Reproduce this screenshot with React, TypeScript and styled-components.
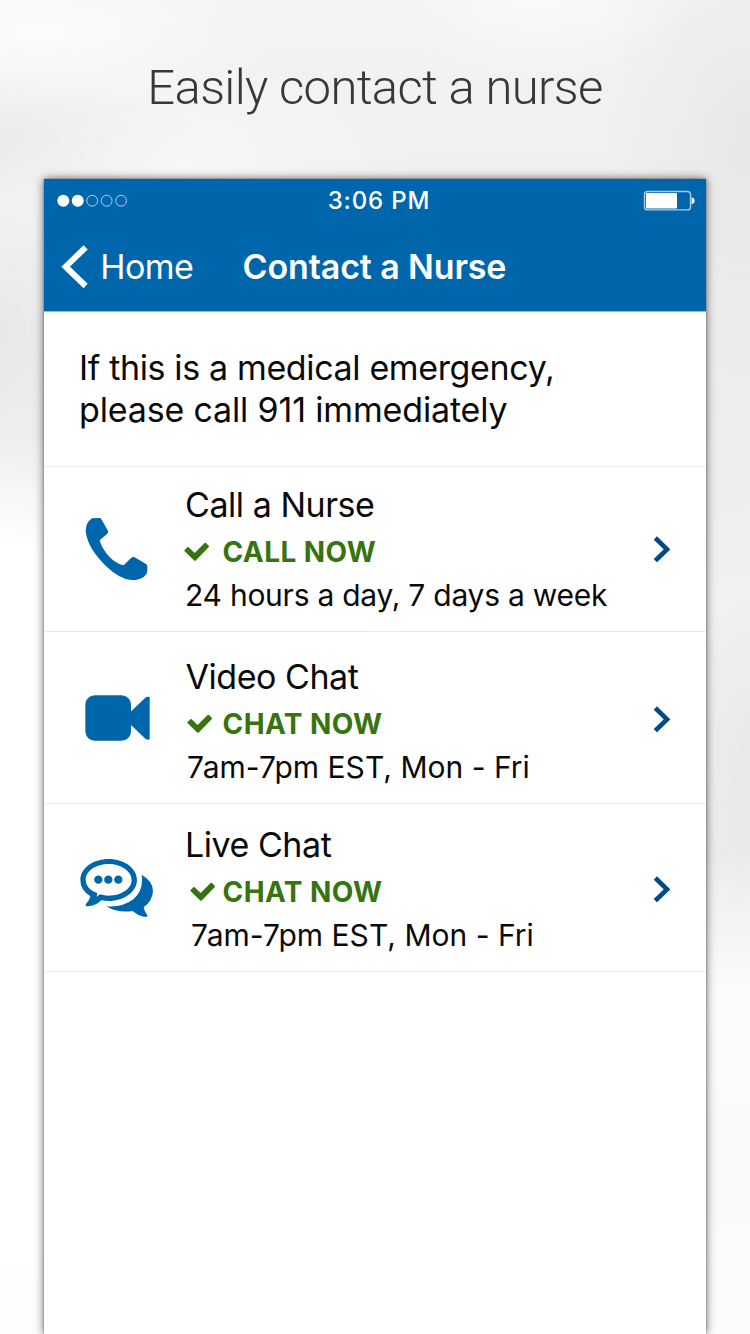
import React from "react";
import styled, { createGlobalStyle } from "styled-components";

const blue = "#0066ab";
const green = "#37740f";

const GlobalStyle = createGlobalStyle`
  * { box-sizing: border-box; }
  html, body { margin: 0; padding: 0; }
  body { font-family: Inter, "Liberation Sans", sans-serif; color: #0a0a0a; }
  svg { display: block; flex: none; }
`;

const Page = styled.main`
  width: 750px;
  height: 1334px;
  overflow: hidden;
  display: flex;
  flex-direction: column;
  align-items: center;
  background:
    radial-gradient(ellipse 210px 65px at 0px 140px, rgba(0, 0, 0, 0.03), transparent),
    radial-gradient(ellipse 240px 90px at 40px 30px, rgba(255, 255, 255, 0.7), transparent),
    radial-gradient(ellipse 250px 110px at 170px 165px, rgba(255, 255, 255, 0.5), transparent),
    radial-gradient(ellipse 150px 260px at 750px 130px, rgba(0, 0, 0, 0.04), transparent),
    radial-gradient(ellipse 160px 80px at 540px 0px, rgba(255, 255, 255, 0.55), transparent),
    radial-gradient(ellipse 70px 90px at 0px 330px, rgba(0, 0, 0, 0.025), transparent),
    radial-gradient(ellipse 60px 170px at 750px 750px, rgba(0, 0, 0, 0.025), transparent),
    radial-gradient(ellipse 400px 470px at 0px 900px, #fff 0, #fff 75%, rgba(255, 255, 255, 0) 100%),
    linear-gradient(to bottom, #f3f3f3 0, #f0f0f0 180px, #ececec 400px, #f1f1f1 600px, #ececec 850px, #fcfcfc 1000px, #f9f9f9 1160px, #fcfcfc 1334px);
`;

const Headline = styled.h1`
  margin: 0;
  height: 179px;
  padding-top: 58px;
  font: 300 49px/60px Roboto, "Liberation Sans", sans-serif;
  letter-spacing: -0.65px;
  color: #383838;
`;

const Phone = styled.section`
  width: 662px;
  flex: 1;
  background: #fff;
  box-shadow: 0 0 9px rgba(0, 0, 0, 0.6), 0 0 2px rgba(0, 0, 0, 0.35);
`;

const Header = styled.header`
  height: 133px;
  background: ${blue};
  border-bottom: 1px solid #8fbadb;
  color: #fff;
`;

const StatusBar = styled.div`
  height: 44px;
  display: grid;
  grid-template-columns: 1fr auto 1fr;
  align-items: center;
  padding: 0 11px 0 13px;
`;

const Clock = styled.time`
  font-size: 24px;
  font-weight: 500;
  line-height: 44px;
  letter-spacing: 0.85px;
  padding-left: 6px;
`;

const Battery = styled.svg`
  justify-self: end;
`;

const NavBar = styled.nav`
  height: 88px;
  display: flex;
  align-items: center;
  padding: 0 0 0 16.5px;
`;

const BackLink = styled.a`
  display: flex;
  align-items: center;
  gap: 12.5px;
  width: 182px;
  font-size: 34px;
  letter-spacing: -0.6px;
  line-height: 44px;
`;

const NavTitle = styled.h2`
  margin: 0;
  font-size: 34px;
  font-weight: 600;
  line-height: 44px;
  letter-spacing: -0.12px;
`;

const Notice = styled.div`
  height: 155px;
  padding: 35px 0 0 35px;
  border-bottom: 1px solid #eeeeee;
`;

const NoticeLine = styled.p<{ $tracking: number }>`
  margin: 0;
  font-size: 34px;
  line-height: 42px;
  white-space: nowrap;
  letter-spacing: ${(p) => p.$tracking}px;
`;

const Row = styled.article<{ $height: number }>`
  height: ${(p) => p.$height}px;
  display: grid;
  grid-template-columns: 104px 1fr 18px;
  padding: 0 35.5px 0 36px;
  border-bottom: 1px solid #ebebeb;
`;

const IconCell = styled.div<{ $inset: number }>`
  display: flex;
  align-items: center;
  padding-left: ${(p) => p.$inset}px;
`;

const Details = styled.div<{ $top: number }>`
  padding-top: ${(p) => p.$top}px;
  white-space: nowrap;
`;

const ServiceName = styled.h3<{ $inset: number }>`
  margin: 0;
  padding-left: ${(p) => p.$inset}px;
  font-size: 34px;
  font-weight: 400;
  line-height: 50px;
  letter-spacing: -0.46px;
`;

const Availability = styled.div<{ $checkInset: number }>`
  display: grid;
  grid-template-columns: 38.5px auto;
  align-items: center;
  height: 44px;
  font-size: 28px;
  font-weight: 700;
  line-height: 44px;
  letter-spacing: 0.42px;
  color: ${green};

  svg { margin-left: ${(p) => p.$checkInset}px; }
`;

const Hours = styled.p<{ $inset: number; $tracking: number }>`
  margin: 0;
  padding-left: ${(p) => p.$inset}px;
  font-size: 30px;
  line-height: 43px;
  letter-spacing: ${(p) => p.$tracking}px;
`;

const ChevronCell = styled.div<{ $drop: number }>`
  display: flex;
  align-items: center;
  padding-top: ${(p) => p.$drop}px;
`;

const SignalDots = () => (
  <svg width="72" height="14" viewBox="0 0 72 14">
    {[0, 1, 2, 3, 4].map((i) => (
      <circle
        key={i}
        cx={6.3 + i * 14.45}
        cy="6.7"
        r={i < 2 ? 6 : 5.4}
        fill={i < 2 ? "#fff" : "none"}
        stroke={i < 2 ? "none" : "#b5d2e8"}
        strokeWidth="1"
      />
    ))}
  </svg>
);

const BatteryIcon = () => (
  <Battery width="52" height="22" viewBox="0 0 52 22">
    <rect x="1.5" y="1.5" width="46" height="18.4" rx="3" fill="none" stroke="#a9cce6" strokeWidth="1.4" />
    <rect x="3" y="3" width="31" height="15.4" rx="1" fill="#fff" />
    <path d="M48.6 7.2q3 .6 3 3.5t-3 3.5z" fill="#fff" />
  </Battery>
);

const BackIcon = () => (
  <svg width="27.3" height="44.7" viewBox="50 193 82 134">
    <path d="M124 200 64 258l60 58" fill="none" stroke="#fff" strokeWidth="18" />
  </svg>
);

const ChevronIcon = () => (
  <svg width="17.7" height="26.7" viewBox="68 48 53 80">
    <path d="m75 54 35 34-35 34" fill="none" stroke="#004b87" strokeWidth="14" />
  </svg>
);

const CheckIcon = () => (
  <svg width="25.3" height="19.3" viewBox="372 156 76 58">
    <path
      d="M374 184q-2-2 0-4l8-8q2-2 4 0l18 17 29-29q3-3 6 0l7 7q2 3 0 5l-38 39q-3 3-6 0z"
      fill={green}
    />
  </svg>
);

const PhoneIcon = () => (
  <svg width="64" height="64" viewBox="75 81 192 192">
    <path
      d="M96 85l22-1q4 0 6 4l19 33q3 6-1 10l-23 20q6 25 29 49 20 21 43 26l22-22q5-5 11-2l33 19q5 3 5 9v12q0 10-10 18-16 11-38 10-36-4-74-40-56-52-63-106 0-26 19-39z"
      fill={blue}
    />
  </svg>
);

const VideoIcon = () => (
  <svg width="65" height="46" viewBox="76 75 195 138">
    <rect x="77" y="76" width="137" height="136" rx="28" fill={blue} />
    <path d="M210 128l47-45q6-5 13-2v127q-7 3-13-2l-47-45z" fill={blue} />
  </svg>
);

const ChatIcon = () => (
  <svg width="73.3" height="59" viewBox="60 54 220 177">
    <path
      fill={blue}
      fillRule="evenodd"
      d="M146 57c47 0 85 28 85 63s-38 63-85 63q-12 0-22-2-17 17-40 18-11 0-6-7 10-9 13-23-30-19-30-49c0-35 38-63 85-63zm0 15c-38 0-69 21-69 48q0 26 35 40l-2 10 10-7q12 4 26 4c38 0 69-21 69-47s-31-48-69-48z"
    />
    {[115, 145, 175].map((cx) => (
      <circle key={cx} cx={cx} cy="119" r="12.5" fill={blue} />
    ))}
    <path
      fill={blue}
      d="M245 104q34 20 34 48 0 28-28 50 2 12 12 26-3 4-12 2-18-4-34-17-42 7-79-14 50 4 82-21 32-27 25-74z"
    />
  </svg>
);

type Service = {
  name: string;
  status: string;
  hours: string;
  icon: React.ReactNode;
  height: number;
  top: number;
  iconInset: number;
  nameInset: number;
  checkInset: number;
  hoursInset: number;
  hoursTracking: number;
  drop: number;
};

const services: Service[] = [
  { name: "Call a Nurse", status: "CALL NOW", hours: "24 hours a day, 7 days a week", icon: <PhoneIcon />, height: 165, top: 13, iconInset: 5, nameInset: 1, checkInset: 0, hoursInset: 1, hoursTracking: -0.25, drop: 0 },
  { name: "Video Chat", status: "CHAT NOW", hours: "7am-7pm EST, Mon - Fri", icon: <VideoIcon />, height: 172, top: 20, iconInset: 5, nameInset: 1.5, checkInset: 2.7, hoursInset: 3, hoursTracking: 0.02, drop: 3 },
  { name: "Live Chat", status: "CHAT NOW", hours: "7am-7pm EST, Mon - Fri", icon: <ChatIcon />, height: 168, top: 15.5, iconInset: 0, nameInset: 1, checkInset: 6.3, hoursInset: 7, hoursTracking: 0.02, drop: 3 },
];

export default function App() {
  return (
    <Page>
      <GlobalStyle />
      <Headline>Easily contact a nurse</Headline>
      <Phone>
        <Header>
          <StatusBar>
            <SignalDots />
            <Clock>3:06 PM</Clock>
            <BatteryIcon />
          </StatusBar>
          <NavBar>
            <BackLink>
              <BackIcon />
              Home
            </BackLink>
            <NavTitle>Contact a Nurse</NavTitle>
          </NavBar>
        </Header>
        <Notice>
          <NoticeLine $tracking={-0.36}>If this is a medical emergency,</NoticeLine>
          <NoticeLine $tracking={-0.16}>please call 911 immediately</NoticeLine>
        </Notice>
        {services.map((s) => (
          <Row key={s.name} $height={s.height}>
            <IconCell $inset={s.iconInset}>{s.icon}</IconCell>
            <Details $top={s.top}>
              <ServiceName $inset={s.nameInset}>{s.name}</ServiceName>
              <Availability $checkInset={s.checkInset}>
                <CheckIcon />
                {s.status}
              </Availability>
              <Hours $inset={s.hoursInset} $tracking={s.hoursTracking}>{s.hours}</Hours>
            </Details>
            <ChevronCell $drop={s.drop}>
              <ChevronIcon />
            </ChevronCell>
          </Row>
        ))}
      </Phone>
    </Page>
  );
}
